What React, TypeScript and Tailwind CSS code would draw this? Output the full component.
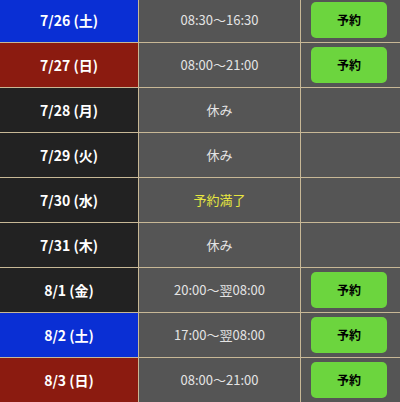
import React from "react";

type Row = { date: string; kind: "sat" | "sun" | "day"; status: string; type: "time" | "off" | "full" };

const rows: Row[] = [
  { date: "7/26 (土)", kind: "sat", status: "08:30〜16:30", type: "time" },
  { date: "7/27 (日)", kind: "sun", status: "08:00〜21:00", type: "time" },
  { date: "7/28 (月)", kind: "day", status: "休み", type: "off" },
  { date: "7/29 (火)", kind: "day", status: "休み", type: "off" },
  { date: "7/30 (水)", kind: "day", status: "予約満了", type: "full" },
  { date: "7/31 (木)", kind: "day", status: "休み", type: "off" },
  { date: "8/1 (金)", kind: "day", status: "20:00〜翌08:00", type: "time" },
  { date: "8/2 (土)", kind: "sat", status: "17:00〜翌08:00", type: "time" },
  { date: "8/3 (日)", kind: "sun", status: "08:00〜21:00", type: "time" },
];

const bgFor = (k: Row["kind"]) =>
  k === "sat" ? "bg-[#0a2fd4]" : k === "sun" ? "bg-[#8b1b10]" : "bg-[#222222]";

export default function App() {
  return (
    <div
      className="w-[400px] h-[402px] overflow-hidden bg-[#555555]"
      style={{ fontFamily: '"Noto Sans CJK JP", "Noto Sans", sans-serif' }}
    >
      <div className="-mt-[2px]">
        {rows.map((r, i) => (
          <div key={i} className="flex h-[45px] border-b border-[#c8b896]">
            <div
              className={`w-[139px] shrink-0 flex items-center justify-center border-r border-[#c8b896] text-white font-bold text-[14px] ${bgFor(r.kind)}`}
            >
              {r.date}
            </div>
            <div
              className={`w-[162px] shrink-0 flex items-center justify-center border-r border-[#c8b896] bg-[#555555] text-[13px] ${
                r.type === "full" ? "text-[#e6e640]" : "text-[#e4e4e4]"
              }`}
            >
              {r.status}
            </div>
            <div className="flex-1 flex items-center bg-[#555555] pl-[10px]">
              {r.type === "time" && (
                <div className="w-[76px] h-[36px] rounded-[5px] bg-[#6cd53e] flex items-center justify-center text-black font-bold text-[12px]">
                  予約
                </div>
              )}
            </div>
          </div>
        ))}
      </div>
    </div>
  );
}
